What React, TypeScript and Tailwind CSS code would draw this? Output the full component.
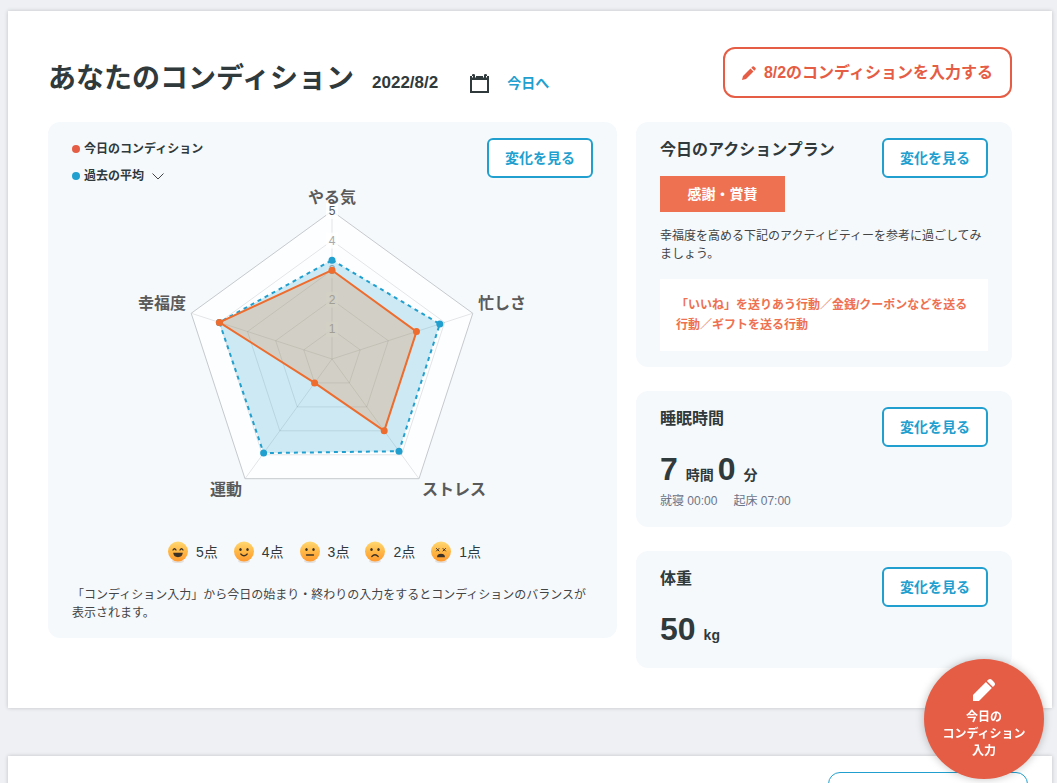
import type { ReactNode } from "react";

const AXES = [
  { label: "やる気", today: 3, average: 3.34, x: 260, y: 15, anchor: "middle" as const },
  { label: "忙しさ", today: 3, average: 3.83, x: 406, y: 121, anchor: "start" as const },
  { label: "ストレス", today: 3, average: 3.85, x: 350, y: 307, anchor: "start" as const },
  { label: "運動", today: 1, average: 3.93, x: 170, y: 307, anchor: "end" as const },
  { label: "幸福度", today: 4, average: 4, x: 114, y: 121, anchor: "end" as const },
];

// Radar geometry: center and the radius of the outermost ring (score 5)
const CX = 260;
const CY = 171;
const RADIUS = 148;

const FACES = [
  { score: 5, mood: "grin" },
  { score: 4, mood: "smile" },
  { score: 3, mood: "flat" },
  { score: 2, mood: "frown" },
  { score: 1, mood: "dizzy" },
] as const;

type Mood = (typeof FACES)[number]["mood"];

function point(axis: number, value: number) {
  const angle = (Math.PI * 2 * axis) / AXES.length - Math.PI / 2;
  const r = (RADIUS * value) / 5;
  return { x: CX + r * Math.cos(angle), y: CY + r * Math.sin(angle) };
}

function polygon(values: number[]) {
  return values
    .map((value, i) => {
      const p = point(i, value);
      return `${p.x.toFixed(1)},${p.y.toFixed(1)}`;
    })
    .join(" ");
}

function RadarChart() {
  const today = AXES.map((a) => a.today);
  const average = AXES.map((a) => a.average);

  return (
    <svg viewBox="0 0 521 340" width="521" height="340" role="img" aria-label="コンディションのバランス" className="mx-auto block max-w-full">
      <polygon points={polygon([5, 5, 5, 5, 5])} fill="#fff" fillOpacity="0.8" />
      {[1, 2, 3, 4].map((ring) => (
        <polygon key={ring} points={polygon(AXES.map(() => ring))} fill="none" stroke="#000" strokeOpacity="0.1" />
      ))}
      {AXES.map((axis, i) => {
        const p = point(i, 5);
        return <line key={axis.label} x1={CX} y1={CY} x2={p.x} y2={p.y} stroke="#000" strokeOpacity="0.1" />;
      })}
      <polygon points={polygon([5, 5, 5, 5, 5])} fill="none" stroke="#c6c9cd" />

      {[1, 2, 3, 4, 5].map((tick) => {
        const y = point(0, tick).y;
        return (
          <g key={tick}>
            <rect x={CX - 6} y={y - 8} width="12" height="16" fill="#fff" fillOpacity="0.75" />
            <text x={CX} y={y + 4} textAnchor="middle" fontSize="12" fill={tick === 5 ? "#555" : "#aaa"}>
              {tick}
            </text>
          </g>
        );
      })}

      <polygon points={polygon(average)} fill="#21a0cf" fillOpacity="0.22" stroke="#21a0cf" strokeWidth="2" strokeDasharray="4 4" />
      {average.map((value, i) => (
        <circle key={i} cx={point(i, value).x} cy={point(i, value).y} r="3.5" fill="#21a0cf" />
      ))}
      <polygon points={polygon(today)} fill="#e5853c" fillOpacity="0.25" stroke="#ee6c2d" strokeWidth="2" />
      {today.map((value, i) => (
        <circle key={i} cx={point(i, value).x} cy={point(i, value).y} r="3.5" fill="#ee6c2d" />
      ))}

      {AXES.map((axis) => (
        <text key={axis.label} x={axis.x} y={axis.y} textAnchor={axis.anchor} fontSize="16" fontWeight="700" fill="#5a5a5a">
          {axis.label}
        </text>
      ))}
    </svg>
  );
}

function Face({ mood }: { mood: Mood }) {
  return (
    <svg width="20" height="22" viewBox="0 0 20 22" aria-hidden="true">
      <defs>
        <linearGradient id={`face-${mood}`} x1="0" y1="0" x2="0" y2="1">
          <stop offset="0" stopColor="#ffd873" />
          <stop offset="0.5" stopColor="#ffb846" />
          <stop offset="1" stopColor="#ff9a30" />
        </linearGradient>
      </defs>
      <ellipse cx="10" cy="20" rx="6" ry="2" fill="#d5c7bb" opacity="0.5" />
      <circle cx="10" cy="10.5" r="10" fill={`url(#face-${mood})`} />
      <g fill="none" stroke="#3d3225" strokeWidth="1.3" strokeLinecap="round">
        {mood === "grin" && (
          <>
            <path d="M5 9Q6.5 6.5 8 9M12 9Q13.5 6.5 15 9" />
            <path d="M6 12.5H14Q13.5 15.5 10 15.5T6 12.5Z" fill="#3d3225" />
          </>
        )}
        {mood === "smile" && <path d="M6.8 13Q10 16.5 13.2 13" />}
        {mood === "flat" && <path d="M6.5 14H13.5" />}
        {mood === "frown" && <path d="M6.8 15.5Q10 12 13.2 15.5" />}
        {mood === "dizzy" && (
          <>
            <path d="M5.5 7.5L8 10M8 7.5L5.5 10M12 7.5L14.5 10M14.5 7.5L12 10" strokeWidth="1" />
            <path d="M6.8 15.5Q7 13.5 10 13.5Q13 13.5 13.2 15.5Z" fill="#3d3225" />
          </>
        )}
      </g>
      {(mood === "smile" || mood === "flat" || mood === "frown") && (
        <g fill="#3d3225">
          <ellipse cx="6.5" cy="8.5" rx="1.2" ry="1.5" />
          <ellipse cx="13.5" cy="8.5" rx="1.2" ry="1.5" />
        </g>
      )}
    </svg>
  );
}

function ChangeButton() {
  return (
    <button type="button" className="h-10 shrink-0 rounded-md border-2 border-[#21a0cf] bg-white px-4 text-sm leading-5 font-bold text-[#21a0cf]">
      変化を見る
    </button>
  );
}

function Panel({ children }: { children: ReactNode }) {
  return <section className="rounded-xl bg-[#f5f9fc] px-6 py-4">{children}</section>;
}

function Header() {
  return (
    <header className="flex h-[51px] items-start justify-between">
      <div className="flex items-baseline pt-3">
        <h1 className="text-[28px] leading-10 font-bold">あなたのコンディション</h1>
        <span className="ml-[18px] text-[17px] leading-6 font-bold">2022/8/2</span>
        <button type="button" aria-label="日付を選択" className="ml-8 self-center pt-2">
          <svg width="19" height="19" viewBox="0 0 19 19" className="block" fill="#30393b">
            <path fillRule="evenodd" d="M0 2H2V1Q2 0 3.5 0T5 1V2H14V1Q14 0 15.5 0T17 1V2H19V19H0ZM2 6V17H17V6Z" />
            <path d="M2.5 3.5V2M5.5 3.5V2M13.5 3.5V2M16.5 3.5V2" stroke="#fff" />
          </svg>
        </button>
        <a href="#today" className="ml-[18px] text-sm leading-5 font-bold text-[#21a0cf]">
          今日へ
        </a>
      </div>
      <button type="button" className="flex h-[51px] items-center gap-2 rounded-xl border-2 border-[#e55d45] bg-white px-[17px] font-bold text-[#e55d45]">
        <svg width="14" height="14" viewBox="0 0 14 14" fill="currentColor" aria-hidden="true">
          <path d="M0 14L1 10L8.5 2.5L11.5 5.5L4 13ZM9.3 1.7L10.5 .5Q11.2 -.2 12 .5L13.5 2Q14.2 2.8 13.5 3.5L12.3 4.7Z" />
        </svg>
        8/2のコンディションを入力する
      </button>
    </header>
  );
}

function ConditionPanel() {
  return (
    <Panel>
      <div className="flex items-start justify-between">
        <div className="flex flex-col gap-[7px] pt-px text-xs leading-5 font-bold">
          <div className="flex items-center gap-1">
            <span className="size-2 rounded-full bg-[#e55d45]" />
            今日のコンディション
          </div>
          <button type="button" className="flex items-center gap-1">
            <span className="size-2 rounded-full bg-[#21a0cf]" />
            過去の平均
            <svg width="12" height="7" viewBox="0 0 12 7" fill="none" stroke="#444" className="ml-1" aria-hidden="true">
              <path d="M.5 .5L6 6L11.5 .5" />
            </svg>
          </button>
        </div>
        <ChangeButton />
      </div>
      <div className="mt-[2px]">
        <RadarChart />
      </div>
      <ul className="mt-3 flex justify-center text-sm leading-6">
        {FACES.map(({ score, mood }) => (
          <li key={score} className="mr-4 flex items-center gap-2">
            <Face mood={mood} />
            {score}点
          </li>
        ))}
      </ul>
      <p className="mt-[22px] text-xs leading-[18px] text-[#444]">
        「コンディション入力」から今日の始まり・終わりの入力をするとコンディションのバランスが表示されます。
      </p>
    </Panel>
  );
}

function ActionPlanPanel() {
  return (
    <Panel>
      <div className="flex items-start justify-between">
        <div>
          <h2 className="text-base leading-6 font-bold">今日のアクションプラン</h2>
          <p className="mt-[14px] w-[125px] bg-[#ee7152] text-center text-sm leading-9 font-bold text-white">感謝・賞賛</p>
        </div>
        <ChangeButton />
      </div>
      <p className="mt-[15px] text-xs leading-[18px] text-[#444]">
        幸福度を高める下記のアクティビティーを参考に過ごしてみましょう。
      </p>
      <p className="mt-4 bg-white p-4 text-xs leading-5 font-bold text-[#ee7152]">
        「いいね」を送りあう行動／金銭/クーポンなどを送る行動／ギフトを送る行動
      </p>
    </Panel>
  );
}

function SleepPanel() {
  return (
    <Panel>
      <div className="flex items-start justify-between">
        <h2 className="text-base leading-6 font-bold">睡眠時間</h2>
        <ChangeButton />
      </div>
      <p className="flex items-baseline text-sm leading-5 font-bold">
        <span className="mr-2 text-[32px] leading-[45px]">7</span>
        <span>時間</span>
        <span className="mr-2 ml-1 text-[32px] leading-[45px]">0</span>
        <span>分</span>
      </p>
      <p className="flex gap-4 text-xs leading-[19px] text-[#6b7489]">
        <span>就寝 00:00</span>
        <span>起床 07:00</span>
      </p>
    </Panel>
  );
}

function WeightPanel() {
  return (
    <Panel>
      <div className="flex items-start justify-between">
        <h2 className="text-base leading-6 font-bold">体重</h2>
        <ChangeButton />
      </div>
      <p className="flex items-baseline text-sm leading-5 font-bold">
        <span className="mr-2 text-[32px] leading-[45px]">50</span>
        <span>kg</span>
      </p>
    </Panel>
  );
}

export default function App() {
  return (
    <div className="h-screen overflow-hidden bg-[#eff0f3] pt-[11px] pr-[5px] pl-2 font-['Liberation_Sans','Noto_Sans_CJK_JP',sans-serif] text-[#30393b]">
      <main className="bg-white px-10 pt-9 pb-10 shadow-[0_0_4px_rgba(0,0,0,0.2)]">
        <Header />
        <div className="mt-6 grid grid-cols-[569fr_376fr] items-start gap-[19px]">
          <ConditionPanel />
          <div className="flex flex-col gap-6">
            <ActionPlanPanel />
            <SleepPanel />
            <WeightPanel />
          </div>
        </div>
      </main>

      <section className="mt-12 flex justify-end bg-white px-6 py-4 shadow-[0_0_4px_rgba(0,0,0,0.2)]">
        <button type="button" aria-label="一覧を見る" className="h-10 w-[200px] rounded-xl border border-[#21a0cf]" />
      </section>

      <button
        type="button"
        className="fixed right-[13px] bottom-1 flex size-[120px] flex-col items-center rounded-full bg-[#e55d45] pt-5 text-xs leading-[17px] font-bold text-white shadow-[0_0_8px_rgba(0,0,0,0.25)]"
      >
        <svg width="22" height="22" viewBox="0 0 22 22" fill="currentColor" className="mb-2" aria-hidden="true">
          <path d="M0 22V16L12.9 3.1L18.9 9.1L6 22ZM13.9 2.1L15.2 .8Q17 -.8 18.8 .8L21.2 3.2Q22.8 5 21.2 6.8L19.9 8.1Z" />
        </svg>
        <span>今日の</span>
        <span>コンディション</span>
        <span>入力</span>
      </button>
    </div>
  );
}
